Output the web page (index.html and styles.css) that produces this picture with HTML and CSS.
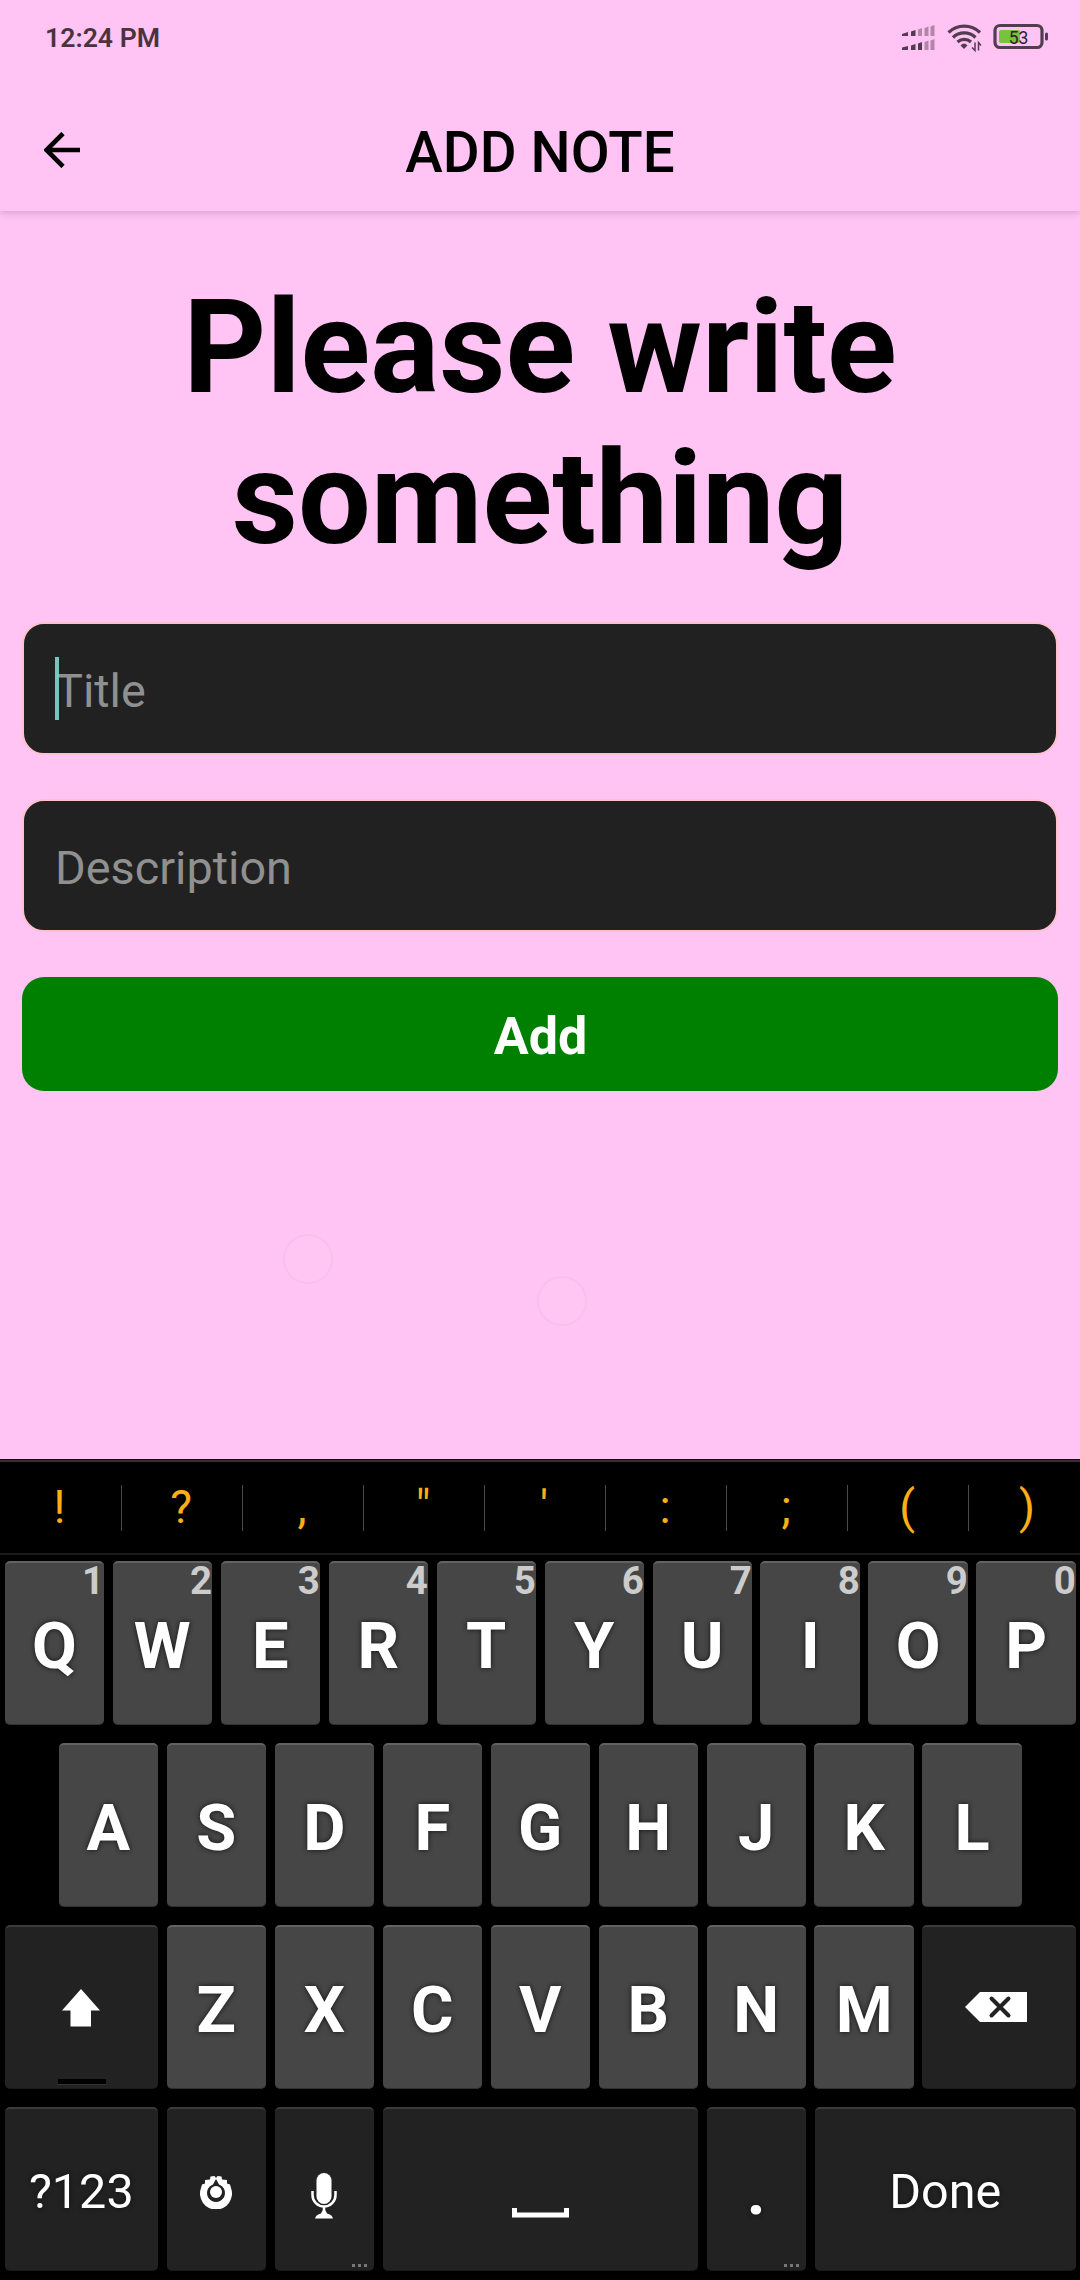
FILE: index.html
```html
<!DOCTYPE html>
<html lang="en">
<head>
<meta charset="utf-8">
<title>Add note</title>
<link rel="stylesheet" href="styles.css">
</head>
<body>
<div class="statusbar">
  <span class="clock">12:24 PM</span>
  <svg width="150" height="32" viewBox="0 0 150 32">
    <g fill="#523c50">
      <path d="M1 12l6-2v4H1zM10 9.500l4.500-1.500v6H10zM1 25.500l6-1.500v4H1zM10 23.500l4.500-1.500v6H10zM17 21.500l4-1.500v8h-4z"/>
      <path opacity=".45" d="M17 7.500l4-1.500v8h-4zM23.500 6l4-1.500v9.500h-4zM29.500 4.500l4-1.500v11h-4zM23.500 20l4-1.500v9.500h-4zM29.500 18.500l4-1.500v11h-4z"/>
      <path d="M63 27l-3.500-3.500q3.500-4 7 0z"/>
    </g>
    <g fill="none" stroke="#523c50" stroke-width="3.200">
      <path d="M47.500 10.500a22.500 22.500 0 0 1 31.500 0M52 15.500a16 16 0 0 1 22.500 0M56.500 20a10 10 0 0 1 13.500 0"/>
      <path stroke-width="1.500" d="M74 20.500v8l-3-3M77.500 28.500v-8l2.500 3"/>
      <rect x="94" y="3.500" width="47" height="22" rx="5"/>
      <path stroke-width="3" stroke-linecap="round" d="M145.500 12v5"/>
    </g>
    <rect x="98" y="8" width="21" height="13" rx="2" fill="#76c33c"/>
    <text x="117.500" y="21.500" text-anchor="middle" font-size="17.500" fill="#2c2030">53</text>
  </svg>
</div>
<header class="appbar">
  <svg class="back" width="36" height="36" viewBox="0 0 36 36"><path d="M36 18H3M19 1.500L2.500 18 19 34.500" fill="none" stroke="#000" stroke-width="4.600"/></svg>
  <div class="title">ADD NOTE</div>
</header>
<main class="content">
  <h1 class="heading">Please write something</h1>
  <div class="field"><span class="placeholder">Title</span><i class="caret"></i></div>
  <div class="field">Description</div>
  <div class="add">Add</div>
  <i class="ripple ripple-left"></i>
  <i class="ripple ripple-right"></i>
</main>
<section class="keyboard">
  <div class="suggestions"><span>!</span><span>?</span><span>,</span><span>"</span><span>'</span><span>:</span><span>;</span><span>(</span><span>)</span></div>
  <div class="row">
    <div class="key">Q<sup>1</sup></div><div class="key">W<sup>2</sup></div><div class="key">E<sup>3</sup></div><div class="key">R<sup>4</sup></div><div class="key">T<sup>5</sup></div><div class="key">Y<sup>6</sup></div><div class="key">U<sup>7</sup></div><div class="key">I<sup>8</sup></div><div class="key">O<sup>9</sup></div><div class="key">P<sup>0</sup></div>
  </div>
  <div class="row middle">
    <div class="key">A</div><div class="key">S</div><div class="key">D</div><div class="key">F</div><div class="key">G</div><div class="key">H</div><div class="key">J</div><div class="key">K</div><div class="key">L</div>
  </div>
  <div class="row">
    <div class="key dark wide"><svg class="shift" width="38" height="38" viewBox="0 0 38 38"><path d="M19 0l19 21.500h-9V37.500H8.500v-16H0z" fill="#fff"/></svg><i class="lock"></i></div>
    <div class="key">Z</div><div class="key">X</div><div class="key">C</div><div class="key">V</div><div class="key">B</div><div class="key">N</div><div class="key">M</div>
    <div class="key dark wide"><svg class="backspace" width="62" height="30" viewBox="0 0 62 30"><path d="M0 15L15 0H62V30H15z" fill="#fff"/><path d="M26.500 6.500L43.500 23.500M43.500 6.500L26.500 23.500" stroke="#222" stroke-width="4" stroke-linecap="round"/></svg></div>
  </div>
  <div class="row">
    <div class="key dark wide label">?123</div>
    <div class="key dark"><svg class="gear" width="34" height="34" viewBox="0 0 34 34"><path d="M17 3l1.500-2 4 .5.500 3 5 .5 0 3.500 3 1 1 3.500a16 16 0 1 1-30 0l1-3.500 3-1 0-3.500 5-.5.5-3 4-.5z" fill="#fff"/><path d="M17 4l3 5.500a9 9 0 1 1-6 0z" fill="#222"/><circle cx="17" cy="17" r="6" fill="#fff"/></svg></div>
    <div class="key dark"><svg class="mic" width="26" height="46" viewBox="0 0 26 46"><rect x="5.500" width="15" height="31" rx="7.500" fill="#fff"/><path d="M1.500 18v4a11.500 11.500 0 0 0 23 0v-4M13 33v8" fill="none" stroke="#fff" stroke-width="2.500"/><path d="M4 45.500q1-4 6-5l1.500-3h3l1.500 3q5 1 6 5z" fill="#fff"/></svg><i class="more"></i></div>
    <div class="key dark space"><svg class="spacebar" width="57" height="10" viewBox="0 0 57 10"><path d="M2.500 0v7H54.500V0" fill="none" stroke="#fff" stroke-width="5"/></svg></div>
    <div class="key dark">.<i class="more"></i></div>
    <div class="key dark done label">Done</div>
  </div>
</section>
</body>
</html>
```
FILE: styles.css
```css
* { box-sizing: border-box; }
body {
  margin: 0;
  width: 1080px;
  height: 2280px;
  display: flex;
  flex-direction: column;
  overflow: hidden;
  background: #ffc4f3;
  font-family: Roboto, sans-serif;
  color: #000;
}
.statusbar {
  height: 76px;
  padding: 0 29px 0 45px;
  display: flex;
  justify-content: space-between;
  align-items: center;
}
.clock { margin-top: -2px; font-size: 26.6px; font-weight: 600; color: #49333f; }
.appbar {
  height: 135px;
  padding: 18px 44px 0;
  display: grid;
  grid-template-columns: 36px 1fr 36px;
  align-items: center;
  box-shadow: 0 1px 8px rgba(80, 20, 70, .25);
  clip-path: inset(0 0 -14px 0);
}
.back { margin-top: -6px; }
.title { font-size: 56.500px; font-weight: 500; text-align: center; }
.content { position: relative; height: 1248px; padding: 61px 22px 0; }
.heading {
  margin: 0 100px 48px;
  font-size: 129px;
  line-height: 151px;
  font-weight: 700;
  text-align: center;
}
.field {
  position: relative;
  height: 133px;
  margin-bottom: 44px;
  padding: 4px 31px 0;
  display: flex;
  align-items: center;
  border: 2px solid #ffc0cb;
  border-radius: 22px;
  background: #212121;
  color: #909090;
  font-size: 46.8px;
}
.caret { position: absolute; left: 31px; top: 33px; width: 4px; height: 63px; background: #80cbc4; opacity: .95; }
.add {
  height: 114px;
  margin-top: 45px;
  padding: 4px 0 0 1px;
  display: flex;
  align-items: center;
  justify-content: center;
  border-radius: 22px;
  background: #008000;
  color: #fff;
  font-size: 52px;
  font-weight: 700;
}
.ripple { position: absolute; width: 50px; height: 50px; border: 2px solid #fabfee; border-radius: 50%; background: #ffc6f3; }
.ripple-left { left: 283px; top: 1023px; }
.ripple-right { left: 537px; top: 1065px; }
.keyboard { height: 821px; background: #000; border-top: 1px solid #111; }
.suggestions {
  height: 95px;
  display: grid;
  grid-template-columns: 122px repeat(7, 121px) 111px;
  align-items: center;
  border-top: 2px solid #333035;
  border-bottom: 2px solid #1a1a1a;
  color: #fcae17;
  font-size: 46px;
  text-align: center;
}
.suggestions span { height: 46px; line-height: 44px; border-right: 1px solid #4a4a4a; }
.suggestions span:not(:last-child) { padding-right: 2px; }
.suggestions span:last-child { padding-left: 5px; border: 0; }
.row {
  height: 164px;
  margin: 6px 4.6px 18px;
  display: flex;
  gap: 8.6px;
}
.row + .row { margin-top: 0; }
.row.middle { margin-left: 58.6px; }
.key {
  position: relative;
  flex: 0 0 99.4px;
  display: flex;
  align-items: center;
  justify-content: center;
  border-radius: 5px;
  background: #464646;
  border-top: 2px solid #626262;
  border-bottom: 1px solid #303030;
  color: #fff;
  font-size: 65px;
  font-weight: 700;
  padding-top: 4px;
  text-shadow: 0 0 5px #111;
}
.key sup {
  position: absolute;
  right: 0;
  top: -1px;
  font-size: 38.5px;
  line-height: 38px;
  color: #ccc;
  text-shadow: none;
}
.key.dark { background: #222; border-top-color: #3b3b3b; border-bottom-color: #191919; }
.key.wide { flex-basis: 153.4px; }
.key.space { flex-basis: 315.4px; }
.key.done { flex-basis: 261.4px; }
.key.label { font-size: 48.5px; font-weight: 400; }
.shift { margin-top: -4px; }
.backspace { margin: -6px 6px 0 0; }
.mic { margin: 9px 1px 0 0; }
.spacebar { margin: 43px 0 0 1px; }
.lock { position: absolute; left: 53px; top: 152px; width: 48px; height: 5px; background: #000; box-shadow: 0 1px #333; }
.more { position: absolute; right: 7px; bottom: 3px; width: 3px; height: 3px; background: #777; box-shadow: -6px 0 #777, -12px 0 #777; }
```
